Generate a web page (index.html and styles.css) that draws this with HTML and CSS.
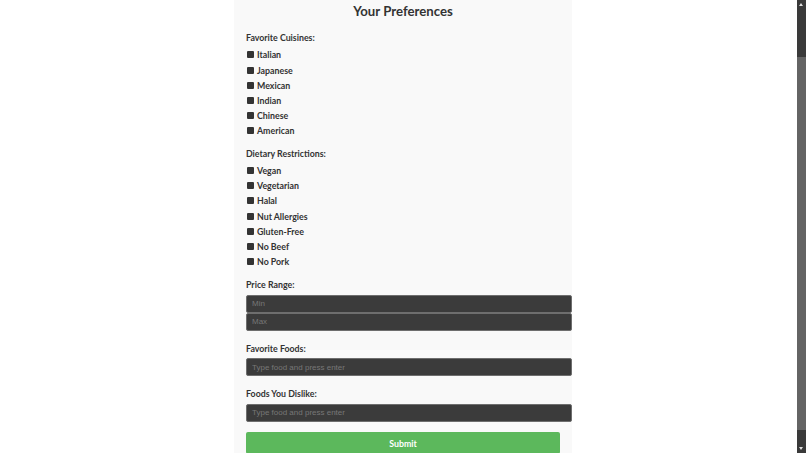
FILE: index.html
```html
<!DOCTYPE html>
<html>
<head>
  <title>Your Preferences</title>
  <link rel="stylesheet" href="styles.css">
</head>
<body>
  <div class="container">
    <h2>Your Preferences</h2>
    <form id="prefs">
      <div class="group">
        <label class="title">Favorite Cuisines:</label>
        <label class="option"><input type="checkbox" name="cuisine" value="Italian">Italian</label>
        <label class="option"><input type="checkbox" name="cuisine" value="Japanese">Japanese</label>
        <label class="option"><input type="checkbox" name="cuisine" value="Mexican">Mexican</label>
        <label class="option"><input type="checkbox" name="cuisine" value="Indian">Indian</label>
        <label class="option"><input type="checkbox" name="cuisine" value="Chinese">Chinese</label>
        <label class="option"><input type="checkbox" name="cuisine" value="American">American</label>
      </div>

      <div class="group">
        <label class="title">Dietary Restrictions:</label>
        <label class="option"><input type="checkbox" name="diet" value="Vegan">Vegan</label>
        <label class="option"><input type="checkbox" name="diet" value="Vegetarian">Vegetarian</label>
        <label class="option"><input type="checkbox" name="diet" value="Halal">Halal</label>
        <label class="option"><input type="checkbox" name="diet" value="Nut Allergies">Nut Allergies</label>
        <label class="option"><input type="checkbox" name="diet" value="Gluten-Free">Gluten-Free</label>
        <label class="option"><input type="checkbox" name="diet" value="No Beef">No Beef</label>
        <label class="option"><input type="checkbox" name="diet" value="No Pork">No Pork</label>
      </div>

      <div class="group price">
        <label class="title field">Price Range:</label>
        <input type="number" class="text-input" placeholder="Min">
        <input type="number" class="text-input" placeholder="Max">
      </div>

      <div class="group foods">
        <label class="title field">Favorite Foods:</label>
        <input type="text" class="text-input" placeholder="Type food and press enter">
      </div>

      <div class="group foods">
        <label class="title field">Foods You Dislike:</label>
        <input type="text" class="text-input" placeholder="Type food and press enter">
      </div>

      <button type="submit" class="submit">Submit</button>
    </form>
  </div>

  <div class="scrollbar">
    <div class="arrow up"></div>
    <div class="thumb"></div>
    <div class="arrow down"></div>
  </div>
</body>
</html>
```

FILE: styles.css
```css
html {
  overflow: hidden;
}

body {
  background-color: #ffffff;
  margin: 0;
  font-family: Lato, "Open Sans", sans-serif;
  color: #333333;
}

.container {
  width: 314px;
  min-height: 100vh;
  margin: 0 auto;
  padding: 2px 12px 0;
  background-color: #f9f9f9;
}

h2 {
  margin: 0;
  font-size: 13.2px;
  line-height: 18px;
  text-align: center;
}

.group {
  display: flex;
  flex-direction: column;
  margin-top: 12px;
}

.group + .group {
  margin-top: 9.4px;
}

.group.price {
  margin-top: 10.4px;
}

.group.foods {
  margin-top: 11.9px;
}

.title {
  font-size: 8.8px;
  font-weight: bold;
  line-height: 12px;
  margin-bottom: 3.4px;
}

.title.field {
  margin-bottom: 3.5px;
}

.option {
  display: flex;
  align-items: center;
  height: 15.15px;
  font-size: 8.8px;
  font-weight: bold;
}

.option input {
  appearance: none;
  width: 7px;
  height: 7px;
  margin: 0 3px 0 1px;
  background-color: #333333;
  border-radius: 1px;
}

.text-input {
  width: 100%;
  height: 16px;
  margin: 0;
  padding: 0 5px;
  background-color: #3b3b3b;
  border: 1px solid #6e6e6e;
  border-radius: 2px;
  color: #ffffff;
  font-family: "Liberation Sans", Arial, sans-serif;
  font-size: 8px;
}

.text-input::placeholder {
  color: #777777;
}

.submit {
  display: block;
  width: 100%;
  height: 22px;
  margin-top: 10.5px;
  background-color: #5cb85c;
  border: none;
  border-radius: 2px;
  color: #ffffff;
  font-family: Lato, "Open Sans", sans-serif;
  font-size: 8.8px;
  font-weight: bold;
  cursor: pointer;
}

.scrollbar {
  position: fixed;
  top: 0;
  right: 0;
  width: 9px;
  height: 100%;
  background-color: #3a3a3a;
}

.thumb {
  position: absolute;
  top: 57px;
  bottom: 23px;
  left: 0;
  right: 0;
  background-color: #646464;
}

.arrow {
  position: absolute;
  left: 2px;
  width: 0;
  height: 0;
  border-left: 2.5px solid transparent;
  border-right: 2.5px solid transparent;
}

.arrow.up {
  top: 3px;
  border-bottom: 3px solid #e0e0e0;
}

.arrow.down {
  bottom: 3px;
  border-top: 3px solid #e0e0e0;
}
```
